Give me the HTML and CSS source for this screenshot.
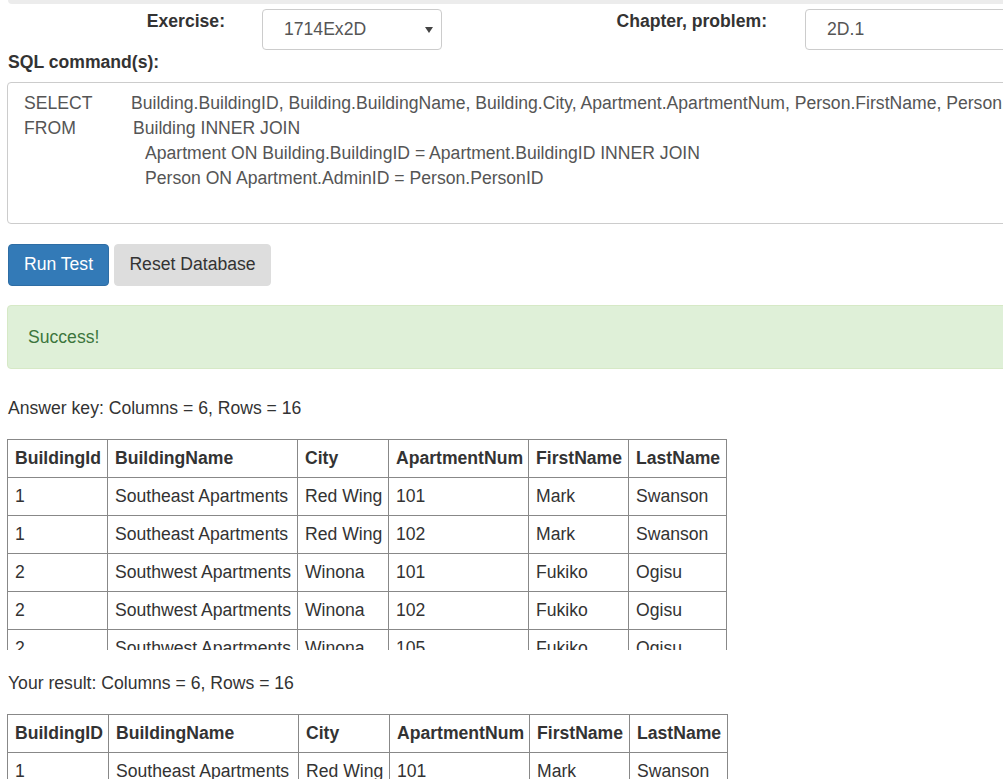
FILE: index.html
```html
<!DOCTYPE html>
<html lang="en">
<head>
<meta charset="utf-8">
<title>SQL Exercise</title>
<link rel="stylesheet" href="styles.css">
</head>
<body>
<div class="topbar"></div>
<div class="page">
  <div class="selector-row">
    <label class="lbl lbl-ex">Exercise:</label>
    <div class="control select">
      <span>1714Ex2D</span>
      <svg class="caret" width="8" height="6" viewBox="0 0 8 6"><path d="M0 0h8L4 6z" fill="#444"/></svg>
    </div>
    <label class="lbl lbl-ch">Chapter, problem:</label>
    <div class="control input">2D.1</div>
  </div>

  <div class="sql-label">SQL command(s):</div>
  <div class="sql-box">
    <div class="sql-line"><span class="kw kw-select">SELECT</span><span>Building.BuildingID, Building.BuildingName, Building.City, Apartment.ApartmentNum, Person.FirstName, Person.LastName</span></div>
    <div class="sql-line"><span class="kw kw-from">FROM</span><span>Building INNER JOIN</span></div>
    <div class="sql-line sql-indent">Apartment ON Building.BuildingID = Apartment.BuildingID INNER JOIN</div>
    <div class="sql-line sql-indent">Person ON Apartment.AdminID = Person.PersonID</div>
  </div>

  <div class="buttons">
    <button class="btn btn-primary">Run Test</button>
    <button class="btn btn-default">Reset Database</button>
  </div>

  <div class="alert">Success!</div>

  <p class="summary summary-first">Answer key: Columns = 6, Rows = 16</p>
  <div class="table-wrap">
    <table class="result result-key">
      <colgroup>
        <col class="c1"><col class="c2"><col class="c3"><col class="c4"><col class="c5"><col class="c6">
      </colgroup>
      <thead>
        <tr><th>BuildingId</th><th>BuildingName</th><th>City</th><th>ApartmentNum</th><th>FirstName</th><th>LastName</th></tr>
      </thead>
      <tbody>
        <tr><td>1</td><td>Southeast Apartments</td><td>Red Wing</td><td>101</td><td>Mark</td><td>Swanson</td></tr>
        <tr><td>1</td><td>Southeast Apartments</td><td>Red Wing</td><td>102</td><td>Mark</td><td>Swanson</td></tr>
        <tr><td>2</td><td>Southwest Apartments</td><td>Winona</td><td>101</td><td>Fukiko</td><td>Ogisu</td></tr>
        <tr><td>2</td><td>Southwest Apartments</td><td>Winona</td><td>102</td><td>Fukiko</td><td>Ogisu</td></tr>
        <tr><td>2</td><td>Southwest Apartments</td><td>Winona</td><td>105</td><td>Fukiko</td><td>Ogisu</td></tr>
      </tbody>
    </table>
  </div>

  <p class="summary summary-second">Your result: Columns = 6, Rows = 16</p>
  <div class="table-wrap table-wrap-second">
    <table class="result result-mine">
      <colgroup>
        <col class="c1w"><col class="c2"><col class="c3"><col class="c4"><col class="c5"><col class="c6">
      </colgroup>
      <thead>
        <tr><th>BuildingID</th><th>BuildingName</th><th>City</th><th>ApartmentNum</th><th>FirstName</th><th>LastName</th></tr>
      </thead>
      <tbody>
        <tr><td>1</td><td>Southeast Apartments</td><td>Red Wing</td><td>101</td><td>Mark</td><td>Swanson</td></tr>
        <tr><td>1</td><td>Southeast Apartments</td><td>Red Wing</td><td>102</td><td>Mark</td><td>Swanson</td></tr>
        <tr><td>2</td><td>Southwest Apartments</td><td>Winona</td><td>101</td><td>Fukiko</td><td>Ogisu</td></tr>
        <tr><td>2</td><td>Southwest Apartments</td><td>Winona</td><td>102</td><td>Fukiko</td><td>Ogisu</td></tr>
        <tr><td>2</td><td>Southwest Apartments</td><td>Winona</td><td>105</td><td>Fukiko</td><td>Ogisu</td></tr>
      </tbody>
    </table>
  </div>
</div>
</body>
</html>
```

FILE: styles.css
```css
html, body {
  overflow: hidden;
}

body {
  margin: 0;
  font-family: "Liberation Sans", Arial, sans-serif;
  font-size: 17.6px;
  line-height: 25px;
  color: #333;
  background: #fff;
}

.topbar {
  margin-left: 8px;
  width: 1200px;
  height: 4px;
  background: #ececec;
  border-bottom-left-radius: 5px;
}

.page {
  width: 1200px;
  padding-left: 7px;
}

/* selector row */
.selector-row {
  display: flex;
  align-items: flex-start;
  margin-top: 5px;
}

.lbl {
  font-weight: bold;
  text-align: right;
  display: block;
}

.lbl-ex {
  width: 218px;
  margin-right: 37px;
}

.lbl-ch {
  width: 325px;
  margin-right: 38px;
}

.control {
  box-sizing: border-box;
  height: 41px;
  border: 1px solid #ccc;
  border-radius: 4px;
  padding: 7px 21px 0;
  color: #555;
  background: #fff;
}

.select {
  width: 180px;
  display: flex;
  justify-content: space-between;
  align-items: flex-start;
  padding-right: 8px;
}

.caret {
  margin-top: 10px;
}

.input {
  width: 300px;
}

/* SQL box */
.sql-label {
  font-weight: bold;
  margin-left: 1px;
}

.sql-box {
  box-sizing: border-box;
  margin-top: 7px;
  height: 142px;
  border: 1px solid #ccc;
  border-radius: 4px;
  padding: 8px 16px;
  color: #555;
  white-space: nowrap;
  overflow: hidden;
}

.sql-line {
  display: flex;
}

.kw {
  display: inline-block;
}

.kw-select {
  width: 107px;
}

.kw-from {
  width: 109px;
}

.sql-indent {
  padding-left: 121px;
}

/* buttons */
.buttons {
  display: flex;
  gap: 5px;
  margin-top: 20px;
  margin-left: 1px;
}

.btn {
  box-sizing: border-box;
  height: 42px;
  font-family: inherit;
  font-size: 17.6px;
  line-height: 25px;
  padding: 7px 0 8px;
  border: 1px solid transparent;
  border-radius: 4px;
  white-space: nowrap;
  text-align: center;
  cursor: pointer;
}

.btn-primary {
  background: #337ab7;
  border-color: #2e6da4;
  color: #fff;
  width: 101px;
}

.btn-default {
  background: #ddd;
  border-color: #ddd;
  color: #333;
  width: 157px;
}

/* alert */
.alert {
  box-sizing: border-box;
  margin-top: 19px;
  height: 64px;
  padding: 19px 20px 18px;
  background: #dff0d8;
  border: 1px solid #d6e9c6;
  border-radius: 4px;
  color: #3c763d;
}

/* results */
.summary {
  margin: 0 0 0 1px;
}

.summary-first {
  margin-top: 27px;
}

.summary-second {
  margin-top: 21px;
}

.table-wrap {
  margin-top: 18px;
  height: 211px;
  overflow: hidden;
}

.table-wrap-second {
  margin-top: 18px;
}

.result {
  border-collapse: collapse;
  table-layout: fixed;
  line-height: 22px;
}

.result-key {
  width: 720px;
}

.result-mine {
  width: 721px;
}

.result th,
.result td {
  border: 1px solid #888;
  padding: 7px 7px 8px;
  text-align: left;
  white-space: nowrap;
  overflow: hidden;
}

.result th {
  font-weight: bold;
}

.c1 { width: 100px; }
.c1w { width: 101px; }
.c2 { width: 190px; }
.c3 { width: 91px; }
.c4 { width: 140px; }
.c5 { width: 100px; }
.c6 { width: 98px; }
```
